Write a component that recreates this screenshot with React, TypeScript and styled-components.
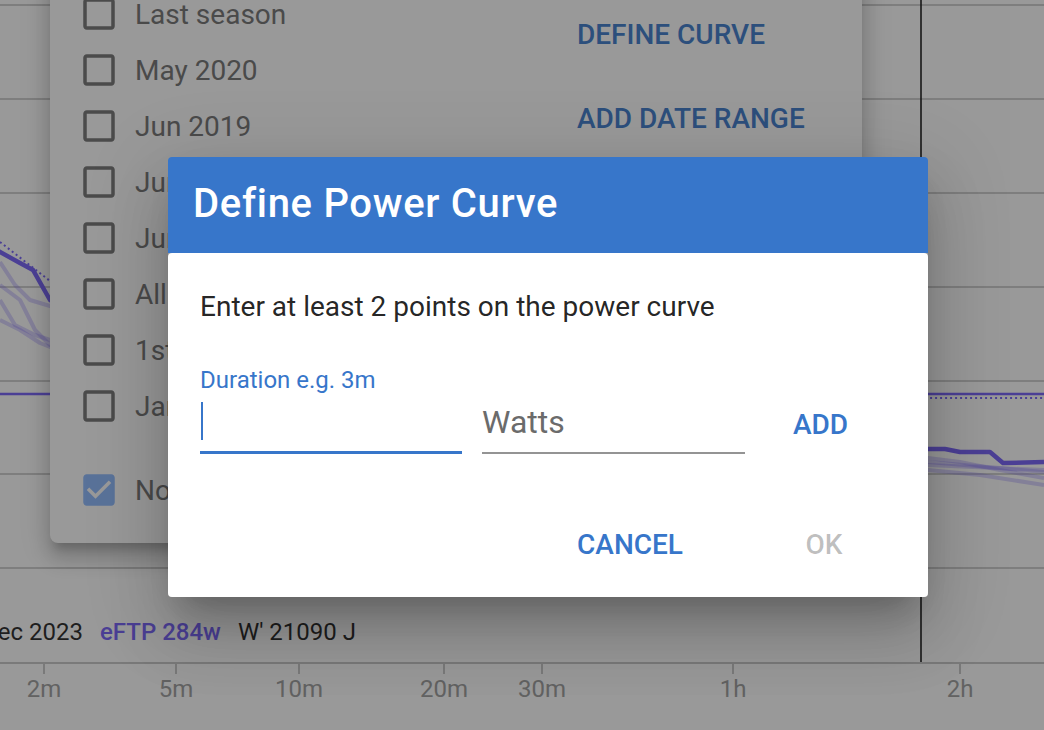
import React from "react"
import styled, {createGlobalStyle} from "styled-components"

const PRIMARY = "#3776ca"
const PURPLE = "#705af8"
const FONT = `Roboto, "Liberation Sans", Arial, sans-serif`

const GlobalStyle = createGlobalStyle`
  html, body {
    margin: 0;
    padding: 0;
    overflow: hidden;
    background: #fff;
  }
  body {
    font-family: ${FONT};
  }
`

const GRID_Y = [5, 99, 193, 287, 381, 474, 568]
const AXIS_Y = 663
const MARKER_X = 921

const TICKS = [
  {x: 44, label: "2m"},
  {x: 176, label: "5m"},
  {x: 299, label: "10m"},
  {x: 444, label: "20m"},
  {x: 542, label: "30m"},
  {x: 733, label: "1h"},
  {x: 960, label: "2h"}
]

// points are [x, y] in chart pixels
const BEST_CURVE = "-10,245 0,252 20,263 33,270 50,300 120,350 250,388 500,418 800,440 928,449 945,449 960,452 990,452 1003,463 1044,462"
const MODEL_CURVE = "0,242 50,281 150,330 300,364 500,385 700,394 928,398 1044,398"
const OLD_CURVES = [
  "0,262 15,285 30,300 50,306 200,380 500,430 928,458 960,462 1000,470 1044,478",
  "0,285 20,300 35,330 50,345 200,400 500,440 928,465 1044,470",
  "0,300 15,325 35,335 50,340 200,395 500,445 928,470 980,475 1044,485",
  "0,320 20,330 40,343 50,347 200,410 500,452 928,462 1000,468 1044,472"
]

const ranges = [
  {name: "Last season", checked: false},
  {name: "May 2020", checked: false},
  {name: "Jun 2019", checked: false},
  {name: "Jun 2018", checked: false},
  {name: "Jun 2017", checked: false},
  {name: "All time", checked: false},
  {name: "1st half 2023", checked: false},
  {name: "Jan 2023", checked: false}
]

export default function App() {
  return (
    <>
      <GlobalStyle/>
      <Page>
        <PowerChart/>
        <Legend>
          <LegendItem>Dec 2023</LegendItem>
          <LegendItem $color={PURPLE} $bold>eFTP 284w</LegendItem>
          <LegendItem>W' 21090 J</LegendItem>
        </Legend>
        <RangeMenu/>
        <Scrim>
          <DefineCurveDialog/>
        </Scrim>
      </Page>
    </>
  )
}

function PowerChart() {
  return (
    <ChartSvg width={1044} height={730} viewBox="0 0 1044 730">
      {GRID_Y.map((y) => (
        <line key={y} x1={0} x2={1044} y1={y} y2={y} stroke="#cdcdcd" strokeWidth={2}/>
      ))}
      {OLD_CURVES.map((pts, i) => (
        <polyline key={i} points={pts} fill="none" stroke={PURPLE} strokeOpacity={0.28} strokeWidth={4}
                  strokeLinejoin="round"/>
      ))}
      <line x1={0} x2={1044} y1={394} y2={394} stroke={PURPLE} strokeWidth={2.5}/>
      <polyline points={MODEL_CURVE} fill="none" stroke={PURPLE} strokeWidth={2} strokeDasharray="2 3"/>
      <polyline points={BEST_CURVE} fill="none" stroke={PURPLE} strokeWidth={4.5} strokeLinejoin="round"/>
      <line x1={MARKER_X} x2={MARKER_X} y1={0} y2={AXIS_Y} stroke="#000" strokeWidth={1.5}/>
      <line x1={0} x2={1044} y1={AXIS_Y} y2={AXIS_Y} stroke="#c6c6c6" strokeWidth={2}/>
      {TICKS.map((t) => (
        <g key={t.label}>
          <line x1={t.x} x2={t.x} y1={AXIS_Y} y2={AXIS_Y + 11} stroke="#c6c6c6" strokeWidth={2}/>
          <TickLabel x={t.x} y={697} textAnchor="middle">{t.label}</TickLabel>
        </g>
      ))}
    </ChartSvg>
  )
}

function RangeMenu() {
  return (
    <Menu>
      <RangeList>
        {ranges.map((r) => (
          <RangeRow key={r.name}>
            <CheckIcon checked={r.checked}/>
            <RangeLabel>{r.name}</RangeLabel>
          </RangeRow>
        ))}
        <RangeRow $spaced>
          <CheckIcon checked={true}/>
          <RangeLabel>Now</RangeLabel>
        </RangeRow>
      </RangeList>
      <MenuActions>
        <TextButton $color={PRIMARY}>DEFINE CURVE</TextButton>
        <TextButton $color={PRIMARY}>ADD DATE RANGE</TextButton>
      </MenuActions>
    </Menu>
  )
}

function CheckIcon({checked}: { checked: boolean }) {
  return (
    <CheckSvg viewBox="0 0 24 24" $checked={checked}>
      {checked ? (
        <path
          d="M19 3H5c-1.11 0-2 .9-2 2v14c0 1.1.89 2 2 2h14c1.11 0 2-.9 2-2V5c0-1.1-.89-2-2-2zm-9 14l-5-5 1.41-1.41L10 14.17l7.59-7.59L19 8l-9 9z"/>
      ) : (
        <path
          d="M19 5v14H5V5h14m0-2H5c-1.1 0-2 .9-2 2v14c0 1.1.9 2 2 2h14c1.1 0 2-.9 2-2V5c0-1.1-.9-2-2-2z"/>
      )}
    </CheckSvg>
  )
}

function DefineCurveDialog() {
  return (
    <Dialog>
      <DialogHeader>Define Power Curve</DialogHeader>
      <DialogBody>
        <Prompt>Enter at least 2 points on the power curve</Prompt>
        <PointRow>
          <Field $width={262} $gap={20}>
            <FieldLabel>Duration e.g. 3m</FieldLabel>
            <InputLine $focused>
              <Caret/>
            </InputLine>
          </Field>
          <Field $width={263} $gap={0}>
            <InputLine $focused={false}>
              <Placeholder>Watts</Placeholder>
            </InputLine>
          </Field>
          <AddButton $color={PRIMARY}>ADD</AddButton>
        </PointRow>
        <DialogActions>
          <TextButton $color={PRIMARY}>CANCEL</TextButton>
          <TextButton $color="rgba(0, 0, 0, 0.26)" disabled>OK</TextButton>
        </DialogActions>
      </DialogBody>
    </Dialog>
  )
}

const Page = styled.div`
  position: relative;
  width: 1044px;
  height: 730px;
  overflow: hidden;
  background: #fff;
`

const ChartSvg = styled.svg`
  display: block;
`

const TickLabel = styled.text`
  font-family: ${FONT};
  font-size: 24px;
  fill: #9a9a9a;
`

const Legend = styled.div`
  position: absolute;
  left: -18px;
  top: 617px;
  display: flex;
  gap: 17px;
  height: 30px;
  align-items: center;
`

const LegendItem = styled.span<{ $color?: string; $bold?: boolean }>`
  font-size: 24px;
  line-height: 30px;
  white-space: nowrap;
  color: ${({$color}) => $color ?? "#1c1c1c"};
  font-weight: ${({$bold}) => ($bold ? 500 : 400)};
`

const Menu = styled.div`
  position: absolute;
  left: 50px;
  top: -30px;
  width: 812px;
  height: 573px;
  box-sizing: border-box;
  padding: 16px 0 25px 28px;
  display: flex;
  background: #fff;
  border-radius: 0 0 8px 8px;
  box-shadow: 0 10px 10px -5px rgba(0, 0, 0, 0.2),
  0 16px 20px 2px rgba(0, 0, 0, 0.14),
  0 6px 28px 5px rgba(0, 0, 0, 0.12);
`

const RangeList = styled.div`
  display: flex;
  flex-direction: column;
  width: 467px;
`

const RangeRow = styled.div<{ $spaced?: boolean }>`
  display: flex;
  align-items: center;
  gap: 15px;
  height: 56px;
  margin-top: ${({$spaced}) => ($spaced ? "28px" : "0")};
`

const CheckSvg = styled.svg<{ $checked: boolean }>`
  width: 42px;
  height: 42px;
  flex: none;
  fill: ${({$checked}) => ($checked ? "#8ab8ff" : "#707070")};
`

const RangeLabel = styled.span`
  font-size: 28px;
  line-height: 33px;
  color: #6e6e6e;
  white-space: nowrap;
`

const MenuActions = styled.div`
  display: flex;
  flex-direction: column;
  align-items: flex-start;
  gap: 12px;
  padding-top: 12px;
`

const TextButton = styled.button<{ $color: string }>`
  height: 72px;
  min-width: 128px;
  padding: 0 32px;
  border: 0;
  background: none;
  font-family: ${FONT};
  font-size: 28px;
  font-weight: 500;
  color: ${({$color}) => $color};
  white-space: nowrap;
  cursor: pointer;
`

const Scrim = styled.div`
  position: fixed;
  inset: 0;
  box-sizing: border-box;
  padding: 157px 0 0 168px;
  display: flex;
  align-items: flex-start;
  background: rgba(33, 33, 33, 0.46);
`

const Dialog = styled.div`
  width: 760px;
  display: flex;
  flex-direction: column;
  border-radius: 4px;
  box-shadow: 0 22px 30px -14px rgba(0, 0, 0, 0.2),
  0 40px 60px 4px rgba(0, 0, 0, 0.14),
  0 16px 80px 12px rgba(0, 0, 0, 0.12);
`

const DialogHeader = styled.div`
  height: 96px;
  box-sizing: border-box;
  padding: 0 25px 3px;
  display: flex;
  align-items: center;
  background: ${PRIMARY};
  border-radius: 4px 4px 0 0;
  color: #fff;
  font-size: 40px;
  line-height: 48px;
  font-weight: 500;
  letter-spacing: 0.7px;
`

const DialogBody = styled.div`
  height: 344px;
  box-sizing: border-box;
  padding: 37px 32px 17px;
  display: flex;
  flex-direction: column;
  background: #fff;
  border-radius: 4px;
`

const Prompt = styled.div`
  font-size: 28px;
  line-height: 33px;
  color: rgba(0, 0, 0, 0.87);
`

const PointRow = styled.div`
  display: flex;
  align-items: flex-end;
  margin-top: 43px;
`

const Field = styled.div<{ $width: number; $gap: number }>`
  width: ${({$width}) => $width}px;
  margin-right: ${({$gap}) => $gap}px;
  display: flex;
  flex-direction: column;
  gap: 8px;
`

const FieldLabel = styled.div`
  font-size: 24px;
  line-height: 28px;
  color: ${PRIMARY};
  white-space: nowrap;
`

const InputLine = styled.div<{ $focused: boolean }>`
  height: 38px;
  padding-bottom: 11px;
  display: flex;
  align-items: center;
  border-bottom: ${({$focused}) => ($focused ? `3px solid ${PRIMARY}` : "2px solid #949494")};
`

const Caret = styled.span`
  width: 2px;
  height: 38px;
  margin-left: 1px;
  background: ${PRIMARY};
`

const Placeholder = styled.span`
  font-size: 32px;
  line-height: 38px;
  color: #6b6b6b;
`

const AddButton = styled(TextButton)`
  flex: 1;
  height: 56px;
  min-width: 0;
  padding: 0;
  margin-bottom: 2px;
`

const DialogActions = styled.div`
  margin: auto 8px 0 0;
  display: flex;
  justify-content: flex-end;
  gap: 45px;
`
